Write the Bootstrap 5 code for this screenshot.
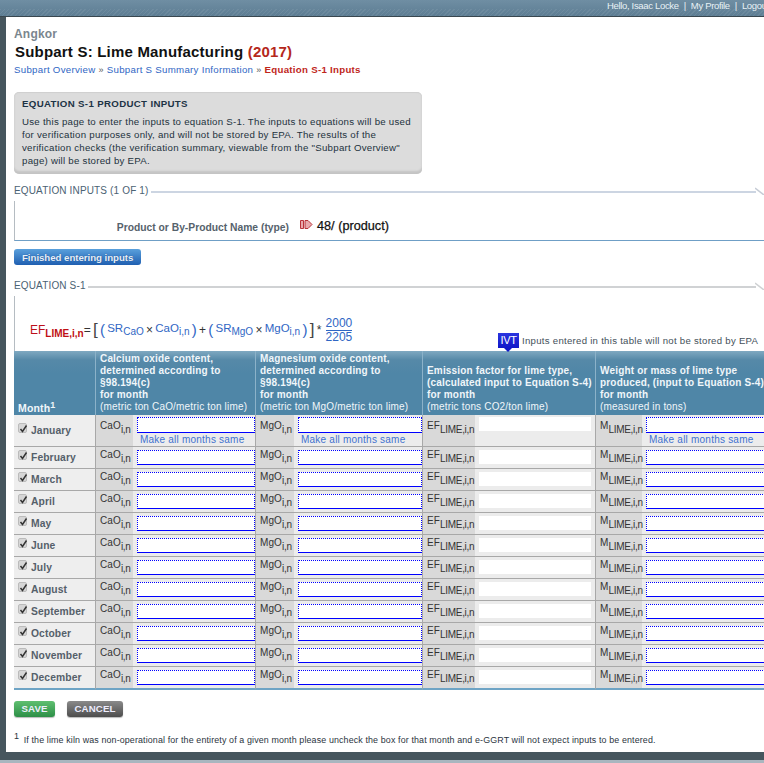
<!DOCTYPE html>
<html lang="en">
<head>
<meta charset="utf-8">
<title>Subpart S: Lime Manufacturing</title>
<link href="https://cdn.jsdelivr.net/npm/bootstrap@5.3.0/dist/css/bootstrap.min.css" rel="stylesheet">
<style>
html,body{height:100%;overflow:hidden}
body{background:#46565e;font-family:"Liberation Sans",Arial,sans-serif;font-size:11px;color:#222}
.shell{width:764px;height:763px;overflow:hidden;display:flex;flex-direction:column;position:relative}
.topbar{height:17px;flex:none;background:repeating-linear-gradient(135deg,rgba(255,255,255,.07) 0 1px,transparent 1px 3px) left 9px/100% 7px no-repeat,linear-gradient(#6f8ea3,#5d7d93);border-bottom:1px solid #39474f;color:#e8f2f6;font-size:9.5px;line-height:11px;white-space:nowrap;letter-spacing:-.33px;padding-left:607px;overflow:hidden}
.topbar .sep{margin:0 5px}
.sheet{margin-left:6px;height:735px;flex:none;background:#fff;overflow:hidden;padding:10px 0 0 8px}
.foot{flex:1;background:#46565e;position:relative}
.foot-light{position:absolute;left:0;right:0;bottom:0;height:3px;background:#a9b6bf}
.org{font-size:12px;font-weight:700;color:#7a868e;line-height:14px;letter-spacing:.2px}
.ttl{font-size:15px;font-weight:700;color:#111;line-height:18px;margin-top:2px;margin-left:1px;letter-spacing:.2px}
.ttl b{color:#b5281c}
.crumbs{font-size:9.7px;line-height:12px;margin-top:3px;color:#555;letter-spacing:.28px}
.crumbs a{color:#2f66c4;text-decoration:none}
.crumbs .here{color:#c0261c;font-weight:700;letter-spacing:.28px}
.crumbs .gl{font-size:9px}
.info{width:408px;height:82px;margin-top:16px;background:#dcdcdc;border-radius:5px;box-shadow:inset 0 -3px 2px #c4c4c4,inset 0 1px 1px #cfcfcf;padding:6px 8px;color:#23323c;font-size:9.7px;line-height:13px;letter-spacing:.25px}
.info h2{font-size:9.7px;font-weight:700;line-height:12px;margin:0 0 5px;color:#1d3345;letter-spacing:.33px}
.info p{margin:0;white-space:nowrap}
.sect{font-size:10px;line-height:12px;color:#4b6273;letter-spacing:.15px;margin-top:11px;align-items:center;white-space:nowrap;margin-right:-1px;position:relative}
.sect.gray{margin-top:15px}
.sect i{flex:1;height:2px;margin-left:2px;background:#ccd5e2;position:relative;top:1px;margin-right:9px}
.sect.gray i{background:#d0d2d4}
.sect svg{flex:none;position:absolute;right:0;top:1px}
.box1{height:40px;border-left:1px solid #b5bcc2;border-bottom:1px solid #6f9fc6;margin-top:4px;padding-top:18px;margin-right:-2px}
.lab{width:274px;text-align:right;font-weight:700;color:#56626c;font-size:10.3px;line-height:14px;padding-top:2px;letter-spacing:0}
.val{font-size:12.7px;color:#111;line-height:14px;-webkit-text-stroke:.25px #111}
.redarrow{margin-left:11px;margin-right:4px;margin-top:1px}
.finish.btn{display:block;width:127px;height:16px;padding:0 0 0 8px;margin-top:8px;border:0;border-radius:3px;font-size:9.7px;font-weight:700;line-height:15px;text-align:left;color:#e7f0fa;background:linear-gradient(#5aa0dc,#1f5fb1);text-shadow:0 0 1px #1c4b84;letter-spacing:-.05px}
.box2{height:55px;border-left:1px solid #b5bcc2;margin-top:4px;position:relative;padding-top:23px;padding-left:15px;color:#2f66c4;white-space:nowrap;font-size:12px}
.eq{align-items:center;height:22px;line-height:14px}
.eq>span{margin-right:2.25px}
.eq .ef{color:#bc101a;font-size:12px;margin-right:0}
.eq .ef sub{font-size:10px;font-weight:700;color:#c00f14;bottom:-.25em}
.eq .blk{color:#333}
.eq sub{font-size:10px;bottom:-.3em}
.eq .br{font-size:17px;line-height:14px;color:#444}
.eq .blu{font-size:11.5px;position:relative;top:-2px}
.eq .par{font-size:15px;color:#2f66c4;line-height:14px}
.frac{display:inline-flex;flex-direction:column;font-size:12px;line-height:12px;align-items:center;margin-left:2px}
.frac u{text-decoration:none;border-bottom:1px solid #2f66c4;line-height:12.5px}
.ivt{position:absolute;left:483px;top:37px;display:flex;align-items:flex-start;white-space:nowrap;color:#44505a;font-size:9.6px;line-height:12px;letter-spacing:.28px}
.ivt span{margin-left:3px;margin-top:2px}
.ivt-ico{width:21px;height:21px;display:block;flex:none;position:relative;color:#fff;font-size:11px;text-align:center}
.ivt-ico em{position:absolute;left:0;top:0;width:21px;height:15px;background:linear-gradient(#2a35e0,#1018c8);font-style:normal;letter-spacing:-.3px;line-height:15px;z-index:1}
.ivt-ico::after{content:"";position:absolute;left:5px;top:14px;border:5.5px solid transparent;border-top:5px solid #1018c8;border-bottom:0}
.tw{width:770px;overflow:hidden}
table.dtab{table-layout:fixed;border-collapse:separate;border-spacing:0;width:770px;margin:0;--bs-table-bg:transparent}
table.dtab>*>*>*{padding:0;border:0;box-shadow:none}
.dtab th.hd{background:linear-gradient(#7fa9c1 0,#5689a8 9px,#4f86a7 22px,#4f86a7 100%);color:#f0f6fa;font-size:10px;line-height:12px;font-weight:700;vertical-align:bottom;padding:0 0 2px 4px;border-right:1px solid #8cb2c9;letter-spacing:.17px;height:64px;white-space:nowrap}
.dtab th.hd small{font-size:10px;font-weight:400;letter-spacing:.17px}
.dtab th.hd sup{font-size:9px;top:-.45em}
.dtab th.mh{padding-left:4px;font-size:10.5px;padding-bottom:1px}
.dtab td{background:#ececec;border-bottom:1px solid #a8a8a8;vertical-align:top;height:22px}
.dtab tr.jan td{height:30px}
.dtab tr.dec td{border-bottom:2px solid #6ea4c5;height:23px}
.dtab td.mon{font-size:10.3px;font-weight:700;color:#55606a;border-right:1px solid #a8a8a8;padding:0 0 0 4px;letter-spacing:.1px;white-space:nowrap;background:#eee;vertical-align:middle}
.chk{display:inline-block;width:9px;height:10px;border:1px solid #bbb;border-radius:2px;background:#d6d6d6;vertical-align:1px;margin-right:4px;position:relative}
.chk svg{position:absolute;left:0;top:0}
.dtab td.sym{background:#d9d9d9;font-size:10px;color:#333;padding:1px 0 0 4px;white-space:nowrap;letter-spacing:.1px;line-height:13px}
.dtab tr.jan td.sym{padding-top:4px}
.dtab td.sym sub{font-size:10px;bottom:-.4em;letter-spacing:-.3px}
.dtab td.inp{padding:0 0 0 4px;border-right:1px solid #a8a8a8}
.dtab td.inp.rd{padding-right:4px}
.fakeinput{display:block;width:100%;height:15px;margin-top:3px;padding:0;background:#fff;border:1px dotted #0000ff;border-bottom:1px solid #0000ff;border-radius:0;outline:0;box-shadow:none}
.jan .fakeinput{height:16px;margin-top:2px}
.fakeinput.ro{border:0;height:14px}
.same{display:block;padding-left:3px;color:#3f72cf;font-size:10px;line-height:13px;letter-spacing:.22px;white-space:nowrap}
.act{margin-top:11px;gap:12px}
.act .btn{height:16px;padding:0;border:0;border-radius:3px;font-size:9.7px;font-weight:700;color:#eef;line-height:14px;letter-spacing:.12px;box-shadow:0 1px 1px #bbb}
.act .sv{width:41px;background:linear-gradient(#5fbf70,#2d8f47)}
.act .cn{width:56px;background:linear-gradient(#8a8a8a,#4d4d4d)}
.fn{margin-top:16px;font-size:8.9px;line-height:14px;color:#2a3440;white-space:nowrap;letter-spacing:.13px}
.fn sup{font-size:9px;top:-.5em;margin-right:2px}
</style>
</head>
<body>
<div class="shell">
<div class="topbar d-flex"><span>Hello, Isaac Locke</span><span class="sep">|</span><span>My Profile</span><span class="sep">|</span><span>Logout</span></div>
<div class="sheet">
 <div class="org">Angkor</div>
 <h1 class="ttl mb-0">Subpart S: Lime Manufacturing <b>(2017)</b></h1>
 <div class="crumbs"><a href="#">Subpart Overview</a> <span class="gl">»</span> <a href="#">Subpart S Summary Information</a> <span class="gl">»</span> <span class="here">Equation S-1 Inputs</span></div>
 <div class="info">
  <h2>EQUATION S-1 PRODUCT INPUTS</h2>
  <p>Use this page to enter the inputs to equation S-1. The inputs to equations will be used<br>for verification purposes only, and will not be stored by EPA. The results of the<br>verification checks (the verification summary, viewable from the "Subpart Overview"<br>page) will be stored by EPA.</p>
 </div>
 <div class="sect d-flex">EQUATION INPUTS (1 OF 1)<i></i><svg width="10" height="9"><path d="M0 2L9 9" stroke="#c6ccd6" stroke-width="1.5" fill="none"/></svg></div>
 <div class="box1 d-flex">
  <div class="lab">Product or By-Product Name (type)</div>
  <svg class="redarrow" width="13" height="9" viewBox="0 0 13 9"><path d="M.5 .5h3v8h-3zM5 .5h3l4 4-4 4H5z" fill="#e9a9ad" stroke="#b8323a"/></svg>
  <div class="val">48/ (product)</div>
 </div>
 <button class="btn finish" type="button">Finished entering inputs</button>
 <div class="sect gray d-flex">EQUATION S-1<i></i><svg width="10" height="9"><path d="M0 2L9 9" stroke="#cfd1d3" stroke-width="1.5" fill="none"/></svg></div>
 <div class="box2">
  <div class="eq d-flex">
   <span class="ef">EF<sub>LIME,i,n</sub></span><span class="blk">=</span><span class="br">[</span><span class="par">(</span><span class="blu">SR<sub>CaO</sub></span><span class="blk">×</span><span class="blu">CaO<sub>i,n</sub></span><span class="par">)</span><span class="blk">+</span><span class="par">(</span><span class="blu">SR<sub>MgO</sub></span><span class="blk">×</span><span class="blu">MgO<sub>i,n</sub></span><span class="par">)</span><span class="br">]</span><span class="blk">*</span><span class="frac"><u>2000</u><span>2205</span></span>
  </div>
  <div class="ivt"><div class="ivt-ico"><em>IVT</em></div><span>Inputs entered in this table will not be stored by EPA</span></div>
 </div>
 <div class="tw">
 <table class="table dtab" id="tb">
  <colgroup><col style="width:82px"><col style="width:37px"><col style="width:123px"><col style="width:38px"><col style="width:129px"><col style="width:52px"><col style="width:121px"><col style="width:46px"><col style="width:142px"></colgroup>
  <thead><tr>
   <th class="hd mh">Month<sup>1</sup></th>
   <th class="hd" colspan="2">Calcium oxide content,<br>determined according to<br>§98.194(c)<br>for month<br><small>(metric ton CaO/metric ton lime)</small></th>
   <th class="hd" colspan="2">Magnesium oxide content,<br>determined according to<br>§98.194(c)<br>for month<br><small>(metric ton MgO/metric ton lime)</small></th>
   <th class="hd" colspan="2">Emission factor for lime type,<br>(calculated input to Equation S-4)<br>for month<br><small>(metric tons CO2/ton lime)</small></th>
   <th class="hd" colspan="2">Weight or mass of lime type<br>produced, (input to Equation S-4)<br>for month<br><small>(measured in tons)</small></th>
  </tr></thead>
  <tbody></tbody>
 </table>
 </div>
 <div class="act d-flex">
  <button class="btn sv" type="button">SAVE</button>
  <button class="btn cn" type="button">CANCEL</button>
 </div>
 <div class="fn"><sup>1</sup> If the lime kiln was non-operational for the entirety of a given month please uncheck the box for that month and e-GGRT will not expect inputs to be entered.</div>
</div>
<div class="foot"><div class="foot-light"></div></div>
</div>
<script>
var months=["January","February","March","April","May","June","July","August","September","October","November","December"];
var tb=document.querySelector("#tb tbody"),h="";
var same='<span class="same">Make all months same</span>';
months.forEach(function(m,i){
 var s=i==0?same:"";
 h+='<tr class="'+(i==0?'jan':i==11?'dec':'')+'"><td class="mon"><span class="chk"><svg width="9" height="10" viewBox="0 0 9 10"><path d="M1.5 5l2 2.5 4-6" stroke="#333" stroke-width="1.5" fill="none"/></svg></span>'+m+'</td>'
 +'<td class="sym">CaO<sub>i,n</sub></td><td class="inp"><input class="fakeinput" aria-label="CaO">'+s+'</td>'
 +'<td class="sym">MgO<sub>i,n</sub></td><td class="inp"><input class="fakeinput" aria-label="MgO">'+s+'</td>'
 +'<td class="sym">EF<sub>LIME,i,n</sub></td><td class="inp rd"><input class="fakeinput ro" aria-label="EF" readonly></td>'
 +'<td class="sym">M<sub>LIME,i,n</sub></td><td class="inp"><input class="fakeinput" aria-label="M">'+s+'</td></tr>';
});
tb.innerHTML=h;
</script>
<script src="https://cdn.jsdelivr.net/npm/bootstrap@5.3.0/dist/js/bootstrap.bundle.min.js"></script>
</body>
</html>
